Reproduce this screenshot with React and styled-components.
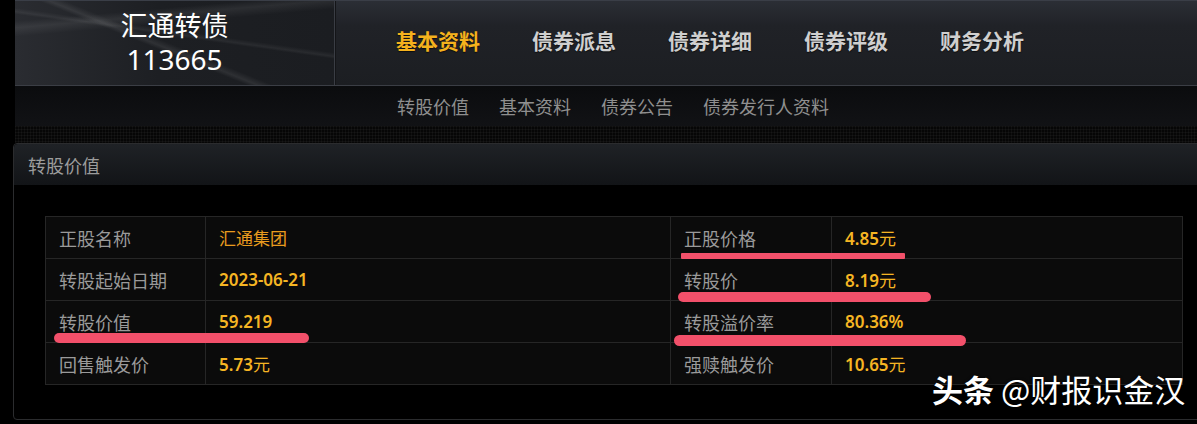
import React from "react";
import styled, { createGlobalStyle } from "styled-components";

const GlobalStyle = createGlobalStyle`
  html, body {
    margin: 0;
    padding: 0;
    background: #000;
    overflow: hidden;
  }
  body {
    font-family: "Noto Sans CJK SC", "Noto Sans", sans-serif;
  }
`;

const Page = styled.div`
  width: 1260px;
  height: 424px;
  background: #000;
`;

const Header = styled.div`
  display: flex;
  height: 84px;
  margin-left: 15px;
  border-top: 1px solid #3a3e47;
  border-bottom: 1px solid #3b3e45;
  background: linear-gradient(to bottom, #2b2e35 0%, #202227 30%, #1c1e22 100%);
`;

const Brand = styled.div`
  width: 319px;
  display: flex;
  flex-direction: column;
  align-items: center;
  justify-content: center;
  gap: 4px;
  padding-bottom: 2px;
  border-right: 1px solid #3a3d44;
  box-shadow: 1px 0 0 #141518;
  background:
    linear-gradient(22deg, transparent 44%, rgba(255, 255, 255, 0.08) 46%, transparent 49%),
    linear-gradient(8deg, transparent 55%, rgba(255, 255, 255, 0.06) 57%, transparent 60%),
    linear-gradient(175deg, transparent 18%, rgba(255, 255, 255, 0.07) 24%, transparent 32%),
    linear-gradient(to right, #2a2c31 0%, #1d1f23 45%, #1b1d21 100%);
`;

const BrandName = styled.div`
  color: #fff;
  font-size: 27px;
  line-height: 30px;
`;

const BrandCode = styled.div`
  color: #fff;
  font-family: "Noto Sans", "Liberation Sans", sans-serif;
  font-size: 28px;
  line-height: 30px;
`;

const Nav = styled.div`
  display: flex;
  align-items: center;
  gap: 52px;
  padding-left: 61px;
  padding-bottom: 7px;
`;

const NavItem = styled.div`
  font-size: 21px;
  font-weight: 700;
  color: ${(p) => (p.$active ? "#f5b21d" : "#cfcfcf")};
  text-shadow: 0 1px 1px rgba(0, 0, 0, 0.6);
`;

const SubNav = styled.div`
  display: flex;
  align-items: center;
  gap: 30px;
  height: 40px;
  margin-left: 15px;
  padding-left: 382px;
  background: linear-gradient(to bottom, #0b0c0e, #111215);
`;

const SubNavItem = styled.div`
  font-size: 18px;
  color: #8f8f8f;
  padding-bottom: 1px;
`;

const Separator = styled.div`
  height: 17px;
  margin-left: 15px;
  background-color: #060606;
  background-image:
    repeating-linear-gradient(to right, rgba(255, 255, 255, 0.035) 0 1px, transparent 1px 3px),
    repeating-linear-gradient(to bottom, rgba(255, 255, 255, 0.035) 0 1px, transparent 1px 3px);
`;

const Panel = styled.div`
  position: relative;
  margin-left: 13px;
  border: 1px solid #2b2c2e;
  border-radius: 4px 0 0 4px;
  height: 275px;
  background: #000;
`;

const PanelHeader = styled.div`
  height: 41px;
  display: flex;
  align-items: center;
  padding-left: 14px;
  background: linear-gradient(to bottom, #1f2226, #121417);
  border-radius: 4px 0 0 0;
`;

const PanelTitle = styled.div`
  font-size: 18px;
  color: #9c9c9c;
`;

const PanelBody = styled.div`
  padding: 31px 0 0 31px;
`;

const TableWrap = styled.div`
  position: relative;
  width: 1137px;
`;

const Table = styled.table`
  width: 1137px;
  border-collapse: collapse;
  table-layout: fixed;
  background: #0b0b0b;
  border: 1px solid #262626;
`;

const Cell = styled.td`
  height: 41px;
  padding: 0 0 0 13px;
  border: 1px solid #262626;
  vertical-align: middle;
`;

const Label = styled(Cell)`
  font-size: 18px;
  color: #9a9a9a;
`;

const Value = styled(Cell)`
  font-family: ${(p) =>
    p.$text ? '"Noto Sans CJK SC", sans-serif' : '"Noto Sans", "Noto Sans CJK SC", sans-serif'};
  font-size: 17px;
  font-weight: ${(p) => (p.$text ? 400 : 600)};
  color: ${(p) => (p.$text ? "#e99b1e" : "#f5b523")};
`;

const Unit = styled.span`
  font-family: "Noto Sans CJK SC", sans-serif;
  font-weight: 400;
`;

const Mark = styled.div`
  position: absolute;
  background: #f2506a;
  border-radius: ${(p) => p.$radius}px;
`;

const Watermark = styled.div`
  position: absolute;
  left: 918px;
  top: 229px;
  font-size: 31px;
  line-height: 1;
  color: #fff;
  white-space: nowrap;
  text-shadow: 0 0 3px rgba(0, 0, 0, 0.8);
`;

const Strong = styled.span`
  font-weight: 700;
`;

const navItems = ["基本资料", "债券派息", "债券详细", "债券评级", "财务分析"];
const subItems = ["转股价值", "基本资料", "债券公告", "债券发行人资料"];

const rows = [
  [
    { label: "正股名称", value: "汇通集团", text: true },
    { label: "正股价格", value: "4.85", unit: "元" },
  ],
  [
    { label: "转股起始日期", value: "2023-06-21" },
    { label: "转股价", value: "8.19", unit: "元" },
  ],
  [
    { label: "转股价值", value: "59.219" },
    { label: "转股溢价率", value: "80.36%" },
  ],
  [
    { label: "回售触发价", value: "5.73", unit: "元" },
    { label: "强赎触发价", value: "10.65", unit: "元" },
  ],
];

// annotation strokes over the table, relative to its top-left corner
const marks = [
  { left: 9, top: 117, width: 255, height: 10, radius: 5 },
  { left: 636, top: 37, width: 224, height: 6, radius: 1 },
  { left: 633, top: 76, width: 253, height: 10, radius: 5 },
  { left: 629, top: 119, width: 292, height: 11, radius: 6 },
];

export default function App() {
  return (
    <Page>
      <GlobalStyle />
      <Header>
        <Brand>
          <BrandName>汇通转债</BrandName>
          <BrandCode>113665</BrandCode>
        </Brand>
        <Nav>
          {navItems.map((item, i) => (
            <NavItem key={item} $active={i === 0}>
              {item}
            </NavItem>
          ))}
        </Nav>
      </Header>
      <SubNav>
        {subItems.map((item) => (
          <SubNavItem key={item}>{item}</SubNavItem>
        ))}
      </SubNav>
      <Separator />
      <Panel>
        <PanelHeader>
          <PanelTitle>转股价值</PanelTitle>
        </PanelHeader>
        <PanelBody>
          <TableWrap>
            <Table>
              <colgroup>
                <col style={{ width: 160 }} />
                <col style={{ width: 465 }} />
                <col style={{ width: 161 }} />
                <col style={{ width: 351 }} />
              </colgroup>
              <tbody>
                {rows.map((row, r) => (
                  <tr key={r}>
                    {row.map((c) => (
                      <React.Fragment key={c.label}>
                        <Label>{c.label}</Label>
                        <Value $text={c.text}>
                          {c.value}
                          {c.unit && <Unit>{c.unit}</Unit>}
                        </Value>
                      </React.Fragment>
                    ))}
                  </tr>
                ))}
              </tbody>
            </Table>
            {marks.map((m, i) => (
              <Mark
                key={i}
                $radius={m.radius}
                style={{ left: m.left, top: m.top, width: m.width, height: m.height }}
              />
            ))}
          </TableWrap>
        </PanelBody>
        <Watermark>
          <Strong>头条</Strong> @财报识金汉
        </Watermark>
      </Panel>
    </Page>
  );
}
